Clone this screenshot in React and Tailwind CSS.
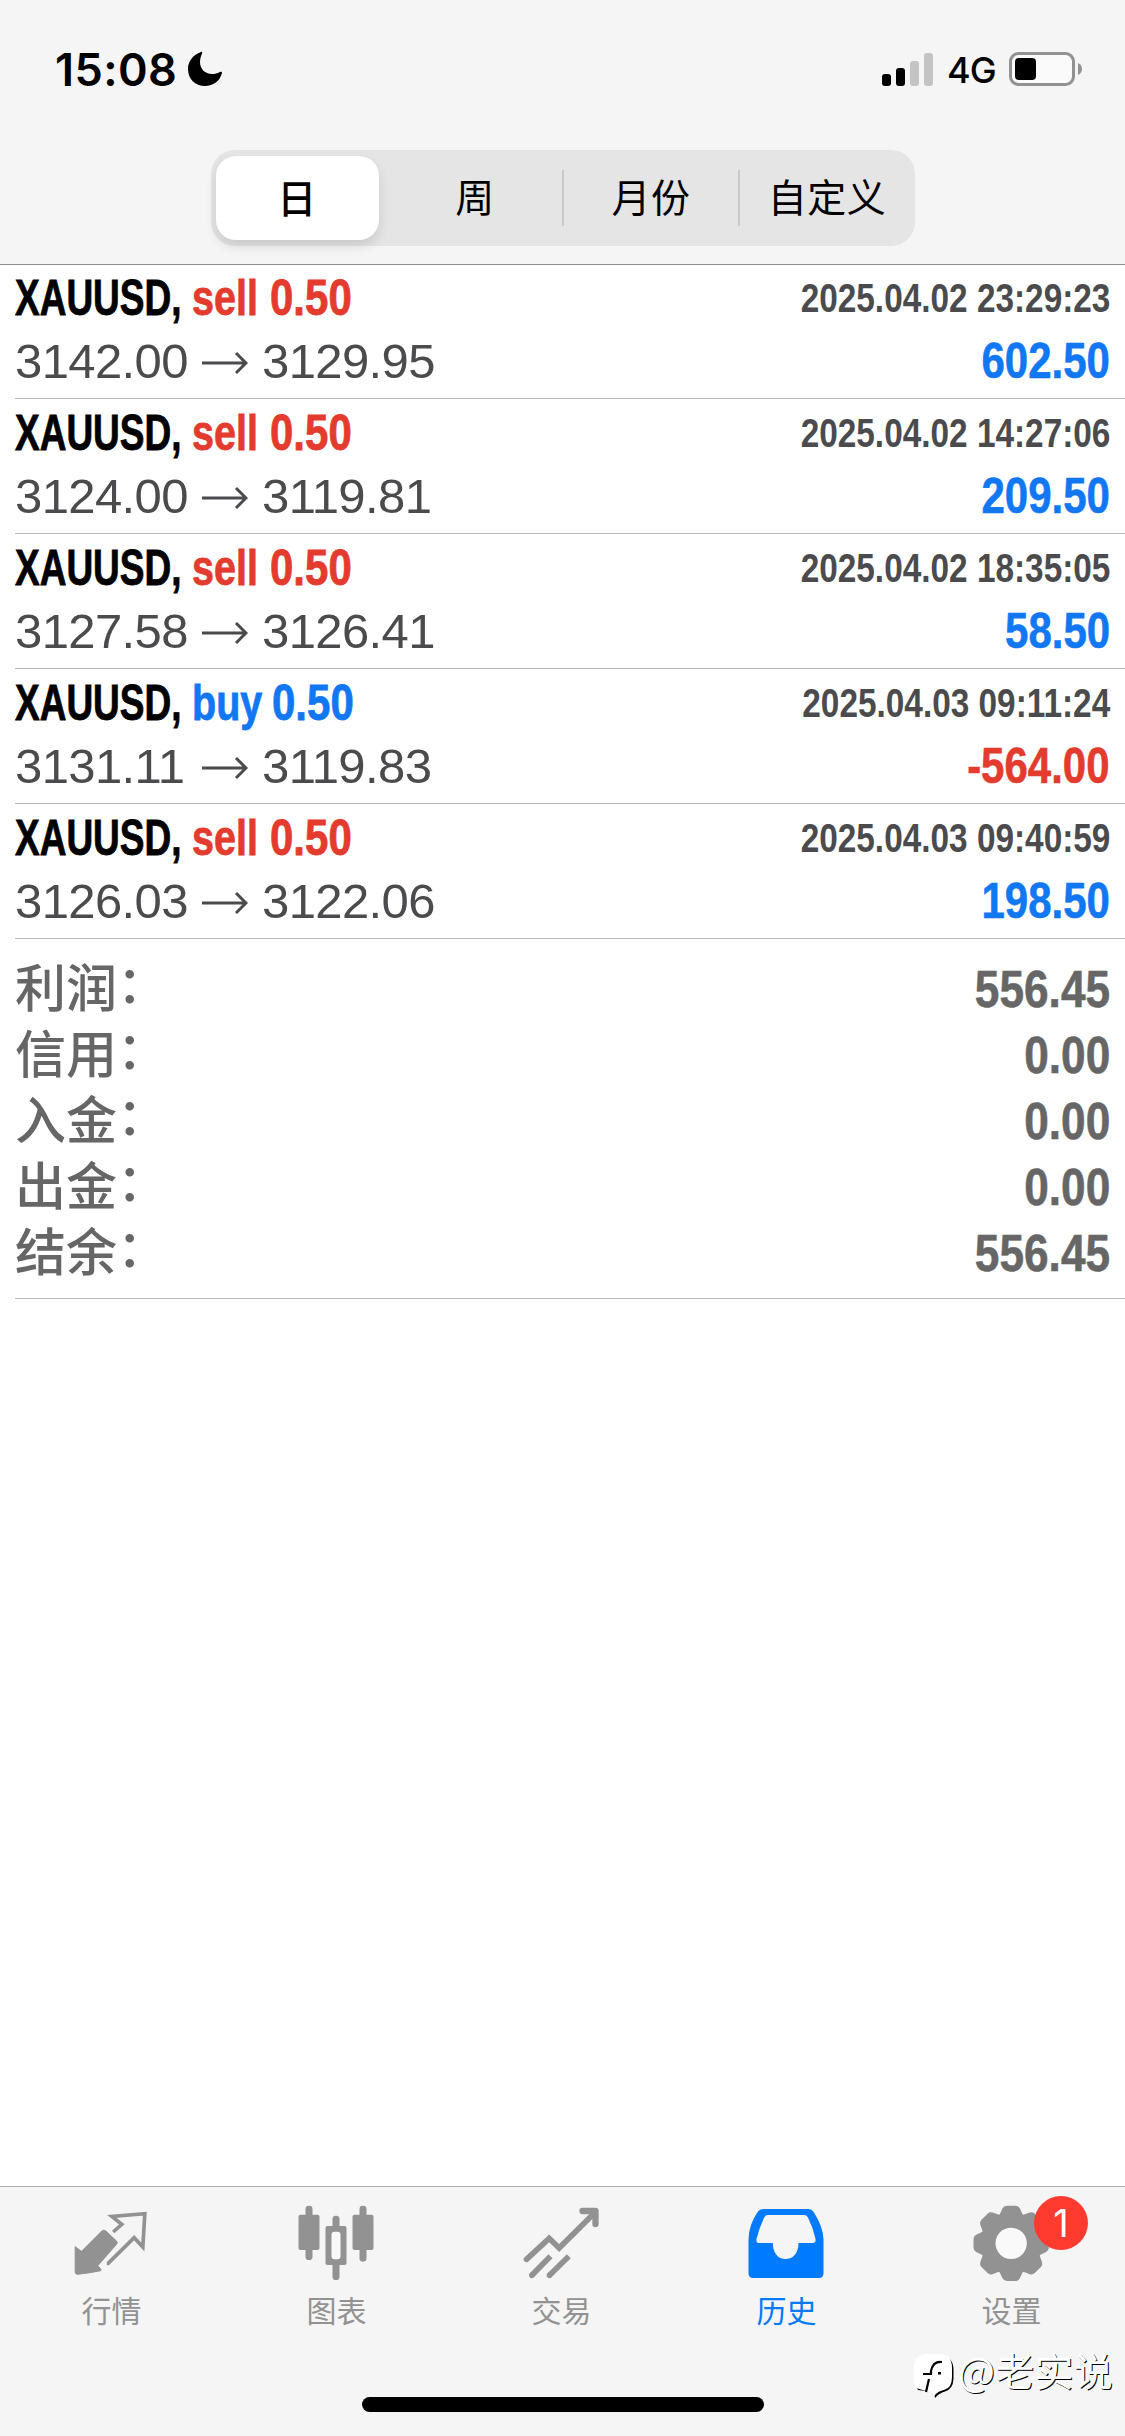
import clsx from 'clsx';

const ranges = ['日', '周', '月份', '自定义'];

const deals = [
    { side: 'sell', open: '3142.00', close: '3129.95', time: '2025.04.02 23:29:23', profit: '602.50' },
    { side: 'sell', open: '3124.00', close: '3119.81', time: '2025.04.02 14:27:06', profit: '209.50' },
    { side: 'sell', open: '3127.58', close: '3126.41', time: '2025.04.02 18:35:05', profit: '58.50' },
    { side: 'buy', open: '3131.11', close: '3119.83', time: '2025.04.03 09:11:24', profit: '-564.00' },
    { side: 'sell', open: '3126.03', close: '3122.06', time: '2025.04.03 09:40:59', profit: '198.50' }
];

const totals = [
    { label: '利润', value: '556.45' },
    { label: '信用', value: '0.00' },
    { label: '入金', value: '0.00' },
    { label: '出金', value: '0.00' },
    { label: '结余', value: '556.45' }
];

function QuotesIcon() {
    return (
        <svg className="w-20 h-20" viewBox="217.5 96 240 240" fill="none" stroke="currentColor">
            <path d="M227 230L246 244L307 183Q313 178 319 183L351 213Q356 218 351 223L295 287L304 298V302Q270 309 234 313Q227 313 227 306Z" fill="currentColor" strokeWidth="3" strokeLinejoin="round" />
            <path d="M341 186L367 163L337 139L436 131L430 231L404 203L326 280H322" strokeWidth="11" />
        </svg>
    );
}

function ChartIcon() {
    return (
        <svg className="w-20 h-20" viewBox="892.5 96 240 240" fill="currentColor">
            <rect x="918" y="107" width="21" height="163" rx="10" />
            <rect x="897" y="134" width="63" height="106" rx="6" />
            <rect x="1080" y="107" width="21" height="168" rx="10" />
            <rect x="1059" y="134" width="63" height="106" rx="6" />
            <rect x="999" y="137" width="21" height="193" rx="10" />
            <rect x="978" y="168" width="63" height="117" rx="6" />
            <rect x="996" y="185" width="27" height="83" rx="9" fill="#f9f9f9" />
        </svg>
    );
}

function TradeIcon() {
    return (
        <svg className="w-20 h-20" viewBox="367.5 96 240 240" fill="none" stroke="currentColor" strokeWidth="17">
            <path d="M381 268L449 205L479 234L584 130" strokeLinecap="round" />
            <path d="M549 123H588V162" strokeWidth="19" strokeLinecap="round" strokeLinejoin="round" />
            <path d="M397 316L453 259M450 316L508 259" />
            <g fill="currentColor" stroke="none">
                <circle cx="397" cy="316" r="8.5" />
                <circle cx="450" cy="316" r="8.5" />
            </g>
        </svg>
    );
}

function HistoryIcon() {
    return (
        <svg className="w-20 h-20" viewBox="1042.5 96 240 240" fill="currentColor">
            <path
                fillRule="evenodd"
                d="M1092 117H1227Q1237 117 1242 125Q1271 170 1272 208V310Q1272 324 1258 324H1061Q1047 324 1047 310V208Q1048 165 1074 127Q1081 117 1092 117ZM1105 135Q1098 135 1095 141Q1080 171 1071 207Q1069 219 1080 219H1120C1120 250 1136 267 1158 267C1181 267 1197 250 1197 219H1240Q1250 219 1248 207Q1240 171 1225 142Q1221 135 1214 135Z"
            />
        </svg>
    );
}

function SettingsIcon() {
    const teeth = [0, 45, 90, 135, 180, 225, 270, 315];
    return (
        <svg className="w-20 h-20" viewBox="367.5 96 240 240" fill="currentColor">
            <g transform="translate(485 220)">
                {teeth.map((angle) => (
                    <path key={angle} transform={`rotate(${angle})`} d="M-40 -80Q-34 -86 -31 -94L-26 -105Q-22 -113 -13 -113H13Q22 -113 26 -105L31 -94Q34 -86 40 -80Z" />
                ))}
                <circle r="89" />
                <circle r="47" fill="#f9f9f9" />
            </g>
        </svg>
    );
}

const tabs = [
    { label: '行情', icon: QuotesIcon },
    { label: '图表', icon: ChartIcon },
    { label: '交易', icon: TradeIcon },
    { label: '历史', icon: HistoryIcon, active: true },
    { label: '设置', icon: SettingsIcon, badge: 1 }
];

function StatusBar() {
    return (
        <div className="flex justify-between h-[150px] pt-[45px] pl-[55px] pr-[42px] text-black">
            <div className="flex items-center h-12 gap-[10px]">
                <span className="font-['Inter'] text-[45px] leading-none font-semibold tracking-[0.4px]">15:08</span>
                <svg className="w-9 h-9" viewBox="0 0 36 36">
                    <path d="M14 1C6 4 1 10 1 18C1 28 8 35 18 35C26 35 33 30 35 22C35 21 34 20.500 33 21C30 22.500 28 23 25 23C18 23 13 18 13 11C13 8 14 5 15 2.500C15.500 1 15 .6 14 1Z" />
                </svg>
            </div>
            <div className="flex items-center h-12">
                <svg className="w-[52px] h-[33px]" viewBox="0 0 52 33">
                    <rect x="0" y="21" width="9" height="12" rx="3" />
                    <rect x="14" y="15" width="9" height="18" rx="3" />
                    <rect x="28" y="8" width="9" height="25" rx="3" fill="#c4c4c4" />
                    <rect x="42" y="0" width="9" height="33" rx="3" fill="#c4c4c4" />
                </svg>
                <span className="ml-[13px] mt-[2px] w-[49px] font-['Inter'] text-[36px] leading-none font-medium tracking-[-1px]">4G</span>
                <svg className="ml-[13px] w-[74px] h-[34px]" viewBox="0 0 74 34">
                    <rect x="1.5" y="1.5" width="63" height="31" rx="8" fill="#fafafa" stroke="#929292" strokeWidth="3" />
                    <rect x="6" y="6" width="21" height="22" rx="4" />
                    <path d="M69 11Q73 13 73 17T69 23Z" fill="#929292" />
                </svg>
            </div>
        </div>
    );
}

function RangePicker() {
    return (
        <div className="flex mx-auto w-[704px] h-[96px] rounded-[24px] bg-[#e5e5e6]">
            {ranges.map((range, index) => (
                <div
                    key={range}
                    className={clsx(
                        'relative flex items-center justify-center text-[39px] tracking-[0.5px] leading-none text-black',
                        index === 0
                            ? 'ml-[5px] my-[6px] w-[163px] mr-[7px] pb-[4px] rounded-[20px] bg-white font-medium shadow-[0_6px_12px_rgba(0,0,0,0.12)]'
                            : 'w-[176px] pb-[5px] pl-[3px]'
                    )}
                >
                    {index > 1 && <i className="absolute left-0 top-5 w-[2px] h-14 bg-[#cacacb]"></i>}
                    {range}
                </div>
            ))}
        </div>
    );
}

function DealRow({ deal }) {
    const sell = deal.side === 'sell';
    return (
        <div className="h-[135px] ml-[15px] pr-[15px] pt-[4px] border-b-[1.5px] border-[#b9b9bb] whitespace-nowrap">
            <div className="flex justify-between h-[60px] leading-[61px]">
                <div className={clsx('flex text-[50px] font-bold [-webkit-text-stroke:0.8px]', sell ? 'text-[#e33b2e]' : 'text-[#1277f3]')}>
                    <span className="w-[177px] text-black"><span className="inline-block origin-left scale-x-[0.74]">XAUUSD,</span></span>
                    <span className={sell ? 'w-[78px]' : 'w-[80px]'}><span className="inline-block origin-left scale-x-[0.79]">{deal.side}</span></span>
                    <span className="inline-block origin-left scale-x-[0.84]">0.50</span>
                </div>
                <span className="inline-block origin-right scale-x-[0.834] text-[40px] font-bold text-[#4b4b4e]">{deal.time}</span>
            </div>
            <div className="flex justify-between h-[66px] leading-[66px] text-[49px]">
                <div className="flex items-center text-[#4b4b4e] tracking-[-0.6px]">
                    <span className="w-[187px]">{deal.open}</span>
                    <svg className="w-[46px] h-6 mt-1 mr-[14px]" viewBox="0 0 46 24" fill="none" stroke="currentColor" strokeWidth="3">
                        <path d="M0 12H44M34 2L44 12L34 22" />
                    </svg>
                    <span>{deal.close}</span>
                </div>
                <span className={clsx('inline-block origin-right scale-x-[0.84] text-[50px] font-bold [-webkit-text-stroke:0.6px]', deal.profit.startsWith('-') ? 'text-[#e33b2e]' : 'text-[#1277f3]')}>
                    {deal.profit}
                </span>
            </div>
        </div>
    );
}

function Totals() {
    return (
        <div className="h-[360px] ml-[15px] pr-[15px] pt-[17px] border-b-[1.5px] border-[#b9b9bb] text-[#666]">
            {totals.map((row) => (
                <div key={row.label} className="flex justify-between h-[66px] leading-[66px]">
                    <span className="-mt-1 font-['Noto_Sans_CJK_SC',sans-serif] text-[51px] font-medium">
                        {row.label}
                        <span className="inline-block -translate-y-[4px]">：</span>
                    </span>
                    <span className="inline-block origin-right scale-x-[0.85] text-[52px] font-bold [-webkit-text-stroke:0.6px]">{row.value}</span>
                </div>
            ))}
        </div>
    );
}

function Watermark() {
    return (
        <div className="absolute left-[914px] top-[164px] flex items-start text-white">
            <svg className="mt-[3px] w-[42px] h-[48px]" viewBox="0 0 42 48">
                <path d="M14 2H28Q39.500 3 39.500 16V25Q39 35 31 37.500Q25 39 21 44L20 38L4 36Q1 30 1 22V14Q1 2 14 2Z" fill="#000" />
                <path d="M12 0H27Q38 1 38 14V23Q38 34 30 36Q24 37 20 42L18 38H14L12 37L2 34Q0 30 0 22V12Q0 1 12 0Z" fill="#fff" />
                <path d="M28 8Q19 7 17 17V20H9M15 25L12 38" fill="none" stroke="#000" strokeWidth="2.200" />
                <rect x="24" y="18" width="3" height="2.500" />
            </svg>
            <span className="ml-[2px] text-[39px] leading-[48px] tracking-[0.3px] whitespace-nowrap -mt-[6px] [text-shadow:1px_1px_0.500px_#000]">@老实说</span>
        </div>
    );
}

function TabBar() {
    return (
        <nav className="relative h-[250px] border-t-[1.5px] border-[#adadad] bg-[#f5f5f5] font-['Noto_Sans_CJK_SC',sans-serif]">
            <div className="flex pt-[15px] -ml-px">
                {tabs.map((tab) => {
                    const Icon = tab.icon;
                    return (
                        <div key={tab.label} className={clsx('relative flex flex-col items-center w-[225px]', tab.active ? 'text-[#007aff]' : 'text-[#929292]')}>
                            <Icon />
                            <span className="mt-[7px] text-[30px] leading-[40px]">{tab.label}</span>
                            {tab.badge && (
                                <span className="absolute left-[135px] top-[-6px] flex items-center justify-center size-[54px] rounded-full bg-[#ff3b30] font-['Inter'] text-[38px] leading-none text-white">
                                    {tab.badge}
                                </span>
                            )}
                        </div>
                    );
                })}
            </div>
            <div className="mt-[68px] mx-auto w-[402px] h-[15px] rounded-full bg-black"></div>
            <Watermark />
        </nav>
    );
}

export default function App() {
    return (
        <div className="flex flex-col w-[1125px] h-[2436px] overflow-hidden bg-white font-['Liberation_Sans','Noto_Sans_CJK_SC',sans-serif]">
            <header className="h-[265px] shrink-0 border-b-[1.5px] border-[#8e8e8e] bg-[#f5f5f5] font-['Noto_Sans_CJK_SC',sans-serif]">
                <StatusBar />
                <RangePicker />
            </header>

            <main className="flex-1 -mt-px">
                {deals.map((deal, index) => (
                    <DealRow key={index} deal={deal} />
                ))}
                <Totals />
            </main>

            <TabBar />
        </div>
    );
}
